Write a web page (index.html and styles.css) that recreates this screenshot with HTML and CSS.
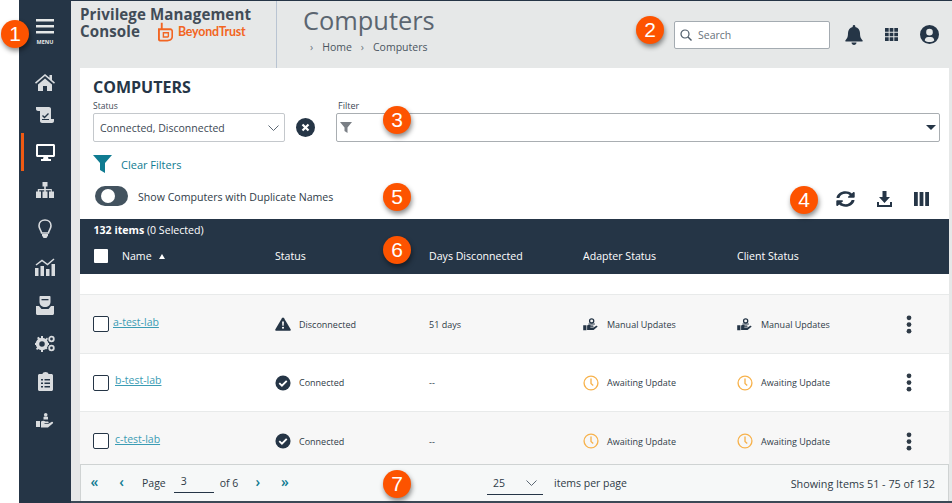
FILE: index.html
```html
<!DOCTYPE html>
<html lang="en">
<head>
<meta charset="utf-8">
<title>Computers</title>
<link rel="stylesheet" href="styles.css">
</head>
<body>
<svg class="defs" width="0" height="0">
  <symbol id="i-hand" viewBox="0 0 24 20"><path d="M0 11h5v8H0zM6 11.500c2-1.500 4-1.500 6 0h3c1.500 0 1.500 2 0 2h-4v1h5l4-2.500c1.500-.8 2.700.8 1.500 2L16 18.500H6z"/><circle cx="13" cy="4.500" r="3.200" fill="none" stroke="currentColor" stroke-width="2"/><path d="M8 8.500h10v1.500H8z"/></symbol>
  <symbol id="i-clock" viewBox="0 0 18 18"><circle cx="9" cy="9" r="7.800" fill="none" stroke="currentColor" stroke-width="1.500"/><path d="M9 4v5.500l2.500 2.200" fill="none" stroke="currentColor" stroke-width="1.500"/></symbol>
  <symbol id="i-check" viewBox="0 0 18 18"><circle cx="9" cy="9" r="8.500"/><path d="M4.800 9.200l3 2.900 5.400-5.500" fill="none" stroke="#fff" stroke-width="2.100"/></symbol>
  <symbol id="i-warn" viewBox="0 0 18 16"><path d="M9 0.500c.5 0 .9.300 1.200.800l7.500 12.700c.5.900-.1 1.800-1 1.800H1.300c-.9 0-1.500-.9-1-1.800L7.800 1.300C8.100.8 8.500.5 9 .5z"/><path d="M8 5h2l-.3 5H8.300z" fill="#fff"/><circle cx="9" cy="12.300" r="1.200" fill="#fff"/></symbol>
  <symbol id="i-kebab" viewBox="0 0 6 20"><circle cx="3" cy="3" r="2.500"/><circle cx="3" cy="10" r="2.500"/><circle cx="3" cy="17" r="2.500"/></symbol>
</svg>

<div class="window">
  <div class="gutter"></div>

  <nav class="sidebar">
    <div class="menu">
      <svg class="menu-bars" viewBox="0 0 18 15"><path d="M0 0h18v2.400H0zM0 6h18v2.400H0zM0 12h18v2.400H0z"/></svg>
      <span class="menu-label">MENU</span>
    </div>
    <a class="nav-item nav-home"><svg viewBox="0 0 20 17" width="20" height="17"><path d="M10 0L0 8.500l1 1.200L10 2l9 7.700 1-1.200-3-2.600V1h-2.500v2.800z"/><path d="M3 10.500L10 4.500l7 6V17h-5v-5H8v5H3z"/></svg></a>
    <a class="nav-item nav-doc"><svg viewBox="0 0 18 16" width="18" height="16"><path d="M0 0h13c1 0 2 .8 2 2v10h3v2c0 1-.8 2-2 2H6c-1 0-2-.8-2-2V4H2C1 4 0 3 0 2z"/><path d="M6.500 8.500l2 2 4-4" fill="none" stroke="#253546" stroke-width="1.400"/><path d="M6 12.500h7" stroke="#253546" stroke-width="1"/></svg></a>
    <a class="nav-item active"><svg viewBox="0 0 19 17" width="19" height="17"><path d="M1.500 0h16c.8 0 1.500.7 1.500 1.500v10c0 .8-.7 1.500-1.500 1.500h-5.500l.5 2h2.500v2h-10v-2H7l.5-2H1.500C.7 13 0 12.300 0 11.500v-10C0 .7.700 0 1.500 0zM2 2v9h15V2z" fill="#fff" fill-rule="evenodd"/></svg></a>
    <a class="nav-item"><svg viewBox="0 0 20 16" width="20" height="16"><path d="M7.500 0h5v4.500h-1.700V7h6v2.500H19V16h-5V9.500h1.800V8.300H10.800v1.200h1.700V16h-5V9.500h1.700V8.300H4.200v1.200H6V16H1V9.500h1.800V7h6.400V4.500H7.500z"/></svg></a>
    <a class="nav-item"><svg viewBox="0 0 14 20" width="14" height="20"><path d="M7 1C3.500 1 1 3.500 1 6.800c0 2.700 2 4.200 2.600 7.200h6.800C11 11 13 9.500 13 6.800 13 3.500 10.500 1 7 1z" fill="none" stroke="currentColor" stroke-width="1.600"/><path d="M4 15h6v1.500l-1.500 2.500h-3L4 16.500z"/></svg></a>
    <a class="nav-item"><svg viewBox="0 0 20 18" width="20" height="18"><path d="M0 10h3.500v8H0zM5.500 8H9v10H5.500zM11 11h3.500v7H11zM16.500 6H20v12h-3.500z"/><path d="M1 7l6-4.500 5.500 4L19 1" fill="none" stroke="currentColor" stroke-width="1.500"/></svg></a>
    <a class="nav-item"><svg viewBox="0 0 18 19" width="18" height="19"><path d="M3.500 1c0-.6.400-1 1-1h9c.6 0 1 .4 1 1v5c0 3-2.500 5-5.500 5S3.500 9 3.500 6z"/><path d="M5.500 3h7v1.300h-7z" fill="#253546"/><path d="M0 10h3l2.500 3h7l2.500-3h3v7.500c0 .8-.7 1.500-1.500 1.500h-15C.7 19 0 18.300 0 17.500z"/></svg></a>
    <a class="nav-item"><svg viewBox="0 0 20 17" width="20" height="17"><circle cx="7" cy="9" r="4.500" fill="none" stroke="currentColor" stroke-width="3.500"/><path d="M6 1h2v3H6zM6 14h2v3H6zM0 8h3v2H0zM11 8h3v2h-3zM2 3l1.500-1.200 2 2L4 5.300zM9 12.700l1.500-1.500 2 2-1.500 1.300zM2 15l-1-1.500 2.500-2L5 13zM9.500 5l2.500-2.500 1 1.500-2 2z"/><circle cx="16.500" cy="4" r="2.300" fill="none" stroke="currentColor" stroke-width="1.800"/><circle cx="16.500" cy="13" r="2.300" fill="none" stroke="currentColor" stroke-width="1.800"/></svg></a>
    <a class="nav-item"><svg viewBox="0 0 15 19" width="15" height="19"><path d="M1.500 2H4.500C4.500 .8 6 0 7.500 0s3 .8 3 2h3c.8 0 1.500.7 1.500 1.500v14c0 .8-.7 1.500-1.500 1.500h-12C.7 19 0 18.300 0 17.500v-14C0 2.700.7 2 1.500 2z"/><path d="M3 7h2v1.500H3zM6.500 7H12v1.500H6.500zM3 10.500h2V12H3zM6.500 10.500H12V12H6.500zM3 14h2v1.500H3zM6.500 14H12v1.500H6.500z" fill="#253546"/></svg></a>
    <a class="nav-item"><svg viewBox="0 0 18 15" width="18" height="15"><path d="M0 8h4v6H0zM5 8.500c1.500-1 3-1 4.500 0h2.300c1.200 0 1.200 1.700 0 1.700H8.500V11H12l3.500-2c1.200-.6 2.200.7 1.200 1.600L12 14.500H5z"/><circle cx="9.700" cy="1.800" r="1.800"/><path d="M7.500 4c1-.6 3.500-.6 4.500 0v2.500H7.500z"/></svg></a>
  </nav>

  <div class="main">
    <header class="topbar">
      <div class="brand">
        <div class="brand-title">Privilege Management</div>
        <div class="brand-row">
          <span class="brand-title">Console</span>
          <svg class="brand-logo" viewBox="0 0 16 20"><path d="M3 0v6H0v12c0 1 .8 2 2 2h8c3 0 6-2 6-5V9c0-1.500-1-3-3-3H5V0zM2 8h11c1 0 1.300.6 1.300 1.300V15c0 2-2 3.300-4.300 3.300H2.500c-.3 0-.5-.2-.5-.5zM5 10v6h5c1 0 1.800-.7 1.800-1.600V10zM6.500 11.500h3.800v3H6.500z" fill-rule="evenodd"/></svg>
          <span class="brand-name">BeyondTrust</span>
        </div>
      </div>
      <div class="page-head">
        <h1 class="page-title">Computers</h1>
        <div class="crumbs"><span class="sep">›</span><span>Home</span><span class="sep">›</span><span>Computers</span></div>
      </div>
      <div class="top-actions">
        <div class="search">
          <svg viewBox="0 0 12 12" width="12" height="12"><circle cx="5" cy="5" r="4" fill="none" stroke="#4c5a68" stroke-width="1.200"/><path d="M8 8l3.500 3.500" stroke="#4c5a68" stroke-width="1.400"/></svg>
          <span>Search</span>
        </div>
        <svg class="top-bell" viewBox="0 0 18 20" width="18" height="20"><path d="M9 0c.8 0 1.300.6 1.300 1.300v.6C13 2.500 15 4.800 15 8c0 4.500 1.200 5.800 2.500 7.200.5.600.2 1.300-.6 1.300H1.100c-.8 0-1.100-.7-.6-1.300C1.800 13.800 3 12.500 3 8c0-3.200 2-5.500 4.700-6.100v-.6C7.700.6 8.200 0 9 0z"/><path d="M6.500 17.500h5C11.500 19 10.300 20 9 20s-2.500-1-2.500-2.500z"/></svg>
        <svg class="top-grid" viewBox="0 0 13 13" width="13" height="13"><path d="M0 0h3.700v3.700H0zM4.650 0h3.700v3.700h-3.700zM9.300 0H13v3.700H9.300zM0 4.650h3.700v3.700H0zM4.650 4.650h3.700v3.700h-3.700zM9.300 4.650H13v3.700H9.300zM0 9.300h3.700V13H0zM4.650 9.300h3.700V13h-3.700zM9.300 9.300H13V13H9.300z"/></svg>
        <svg class="top-user" viewBox="0 0 20 20" width="19" height="19"><path d="M10 0a10 10 0 1 1 0 20 10 10 0 0 1 0-20zm0 4a3.500 3.500 0 1 0 0 7 3.500 3.500 0 0 0 0-7zm-5 12.200c1.300 1.200 3 1.800 5 1.800s3.700-.6 5-1.800c0-2-1.500-3.700-3.500-3.700h-3c-2 0-3.500 1.700-3.500 3.700z" fill-rule="evenodd"/></svg>
      </div>
    </header>

    <section class="panel">
      <div class="panel-head">
        <h2 class="panel-title">COMPUTERS</h2>
        <div class="filters">
          <div class="field field-status">
            <label class="field-label">Status</label>
            <div class="select">
              <span>Connected, Disconnected</span>
              <svg viewBox="0 0 11 6" width="11" height="6"><path d="M.5.500l5 5 5-5" fill="none" stroke="#5c6874" stroke-width="1"/></svg>
            </div>
          </div>
          <svg class="clear-x" viewBox="0 0 19 19" width="19" height="19"><circle cx="9.500" cy="9.500" r="9.500"/><path d="M6.500 6.500l6 6M12.500 6.500l-6 6" stroke="#fff" stroke-width="2.200"/></svg>
          <div class="field field-filter">
            <label class="field-label filter-label">Filter</label>
            <div class="select filter-box">
              <svg viewBox="0 0 12 11" width="12" height="11"><path d="M0 0h12L7.500 5.500V11l-3-2V5.500z" fill="#7a7f85"/></svg>
              <svg class="caret" viewBox="0 0 10 5" width="10" height="5"><path d="M0 0h10L5 5z" fill="#253546"/></svg>
            </div>
          </div>
        </div>
        <div class="clear-row">
          <svg viewBox="0 0 19 18" width="19" height="18"><path d="M0 0h19l-7 8v10l-5-3V8z" fill="#0f7b91"/></svg>
          <a class="clear-link">Clear Filters</a>
        </div>
        <div class="tool-row">
          <span class="toggle"><span class="knob"></span></span>
          <span class="toggle-label">Show Computers with Duplicate Names</span>
          <div class="tools">
            <svg viewBox="0 0 512 512" width="19" height="16" preserveAspectRatio="none"><path d="M370.720 133.280C339.458 104.008 298.888 87.962 255.848 88c-77.458.068-144.328 53.178-162.791 126.850-1.344 5.363-6.122 9.150-11.651 9.150H24.103c-7.498 0-13.194-6.807-11.807-14.176C33.933 94.924 134.813 8 256 8c66.448 0 126.791 26.136 171.315 68.685L463.030 40.970C478.149 25.851 504 36.559 504 57.941V192c0 13.255-10.745 24-24 24H345.941c-21.382 0-32.090-25.851-16.971-40.971l41.750-41.749zM32 296h134.059c21.382 0 32.090 25.851 16.971 40.971l-41.750 41.750c31.262 29.273 71.835 45.319 114.876 45.280 77.418-.070 144.315-53.144 162.787-126.849 1.344-5.363 6.122-9.150 11.651-9.150h57.304c7.498 0 13.194 6.807 11.807 14.176C478.067 417.076 377.187 504 256 504c-66.448 0-126.791-26.136-171.315-68.685L48.970 471.030C33.851 486.149 8 475.441 8 454.059V320c0-13.255 10.745-24 24-24z"/></svg>
            <svg viewBox="0 0 15 16" width="15" height="16"><path d="M5.500 0h4v6h3.500l-5.500 6L2 6h3.500z"/><path d="M0 11h2v3h11v-3h2v5H0z"/></svg>
            <svg viewBox="0 0 15 14" width="15" height="14"><path d="M0 0h3.800v14H0zM5.600 0h3.800v14H5.600zM11.200 0H15v14h-3.800z"/></svg>
          </div>
        </div>
      </div>

      <div class="grid-head">
        <div class="count"><b>132 items</b> (0 Selected)</div>
        <div class="row-cols head-cols">
          <div class="col-name"><span class="head-check"></span><span>Name</span><span class="sort"></span></div>
          <div>Status</div>
          <div>Days Disconnected</div>
          <div>Adapter Status</div>
          <div>Client Status</div>
          <div></div>
        </div>
      </div>

      <div class="grid-body">
        <div class="row-cols row row-a">
          <div class="col-name"><span class="check"></span><a class="link link-tight">a-test-lab</a></div>
          <div class="cell"><svg class="ico" width="16" height="14"><use href="#i-warn"/></svg><span>Disconnected</span></div>
          <div class="cell">51 days</div>
          <div class="cell"><svg class="ico" width="16" height="13"><use href="#i-hand"/></svg><span>Manual Updates</span></div>
          <div class="cell"><svg class="ico" width="16" height="13"><use href="#i-hand"/></svg><span>Manual Updates</span></div>
          <div class="cell"><svg width="6" height="19"><use href="#i-kebab"/></svg></div>
        </div>
        <div class="row-cols row row-b">
          <div class="col-name"><span class="check"></span><a class="link">b-test-lab</a></div>
          <div class="cell"><svg class="ico" width="16" height="16"><use href="#i-check"/></svg><span>Connected</span></div>
          <div class="cell">--</div>
          <div class="cell"><svg class="ico amber" width="16" height="16"><use href="#i-clock"/></svg><span>Awaiting Update</span></div>
          <div class="cell"><svg class="ico amber" width="16" height="16"><use href="#i-clock"/></svg><span>Awaiting Update</span></div>
          <div class="cell"><svg width="6" height="19"><use href="#i-kebab"/></svg></div>
        </div>
        <div class="row-cols row row-a">
          <div class="col-name"><span class="check"></span><a class="link">c-test-lab</a></div>
          <div class="cell"><svg class="ico" width="16" height="16"><use href="#i-check"/></svg><span>Connected</span></div>
          <div class="cell">--</div>
          <div class="cell"><svg class="ico amber" width="16" height="16"><use href="#i-clock"/></svg><span>Awaiting Update</span></div>
          <div class="cell"><svg class="ico amber" width="16" height="16"><use href="#i-clock"/></svg><span>Awaiting Update</span></div>
          <div class="cell"><svg width="6" height="19"><use href="#i-kebab"/></svg></div>
        </div>
      </div>

      <footer class="pager">
        <div class="pager-left">
          <span class="pg">«</span>
          <span class="pg">‹</span>
          <span class="page-word">Page</span>
          <span class="page-input">3</span>
          <span>of 6</span>
          <span class="pg pg-next">›</span>
          <span class="pg">»</span>
        </div>
        <div class="pager-mid">
          <span class="size-select"><span>25</span><svg viewBox="0 0 11 6" width="11" height="6"><path d="M.5.500l5 5 5-5" fill="none" stroke="#5c6874" stroke-width="1"/></svg></span>
          <span>items per page</span>
        </div>
        <div class="pager-right">Showing Items 51 - 75 of 132</div>
      </footer>
    </section>
  </div>
</div>

<span class="badge b1">1</span>
<span class="badge b2">2</span>
<span class="badge b3">3</span>
<span class="badge b4">4</span>
<span class="badge b5">5</span>
<span class="badge b6">6</span>
<span class="badge b7">7</span>
</body>
</html>
```

FILE: styles.css
```css
* { box-sizing: border-box; }
html, body { margin: 0; padding: 0; height: 503px; overflow: hidden; background: #fff; }
body { font-family: "Open Sans", "Liberation Sans", sans-serif; color: #253546; position: relative; }
.defs { position: absolute; }
svg { display: block; fill: currentColor; flex: none; }

.window { display: flex; height: 503px; }
.gutter { width: 19px; flex: none; }

.sidebar { width: 52px; flex: none; background: #253546; color: #d9dcdf; display: flex; flex-direction: column; align-items: center; padding-top: 19px; position: relative; border-bottom: 2px solid #253546; }
.menu { display: flex; flex-direction: column; align-items: center; height: 48px; flex: none; color: #e6e8e8; }
.menu-bars { width: 18px; height: 15px; }
.menu-label { font-size: 5.500px; font-weight: 700; margin-top: 4px; line-height: 8px; }
.nav-item { height: 38.300px; flex: none; width: 100%; display: flex; align-items: center; justify-content: center; position: relative; }
.nav-home { height: 30px; }
.nav-doc { height: 36px; }
.nav-item.active::before { content: ""; position: absolute; left: 2px; top: 0; bottom: 0; width: 3px; background: #ef5a13; }

.main { flex: 1; min-width: 0; display: flex; flex-direction: column; background: #e6e8e8; border-top: 1px solid #253546; border-bottom: 2px solid #3b4956; }

.topbar { height: 67px; flex: none; display: flex; align-items: stretch; }
.brand { width: 206px; flex: none; padding: 5px 0 0 9px; border-right: 1px solid #b9c4d2; }
.brand-title { font-size: 15.100px; font-weight: 700; color: #414c57; line-height: 17px; letter-spacing: .1px; }
.brand-row { display: flex; align-items: center; height: 17px; }
.brand-logo { width: 15px; height: 20px; margin: -2px 0 -2px 18px; color: #f26522; }
.brand-name { font-family: "Lato", sans-serif; font-size: 12.400px; font-weight: 700; color: #f26522; margin-left: 5px; letter-spacing: -.2px; }
.page-head { padding: 3px 0 0 26px; flex: none; }
.page-title { font-size: 25.400px; font-weight: 400; margin: 0; line-height: 32px; color: #5b6570; }
.crumbs { display: flex; font-size: 10.500px; color: #4a5560; gap: 9px; margin-top: 4px; padding-left: 7px; line-height: 15px; }
.crumbs .sep { color: #6c7680; }
.top-actions { margin-left: auto; display: flex; align-items: center; padding: 0 13px 0 0; height: 67px; color: #253546; }
.search { width: 156px; height: 28px; background: #fff; border: 1px solid #a4abb1; border-radius: 2px; display: flex; align-items: center; gap: 6px; padding-left: 5px; font-size: 10.500px; color: #68727c; }
.top-bell { margin-left: 15px; }
.top-grid { margin-left: 22px; }
.top-user { margin-left: 22px; }

.panel { flex: 1; min-height: 0; margin: 0 3px 0 9px; background: #fff; display: flex; flex-direction: column; }
.panel-head { height: 151px; flex: none; padding: 10px 9px 0 13px; }
.panel-title { font-size: 16px; font-weight: 700; margin: 0; line-height: 19px; color: #253546; }
.filters { display: flex; align-items: flex-end; margin-top: 3px; }
.field { display: flex; flex-direction: column; }
.field-status { width: 192px; flex: none; }
.field-filter { flex: 1; min-width: 0; margin-left: 21px; }
.field-label { font-size: 8.500px; line-height: 12px; height: 13px; color: #3c4854; }
.filter-label { font-size: 9px; margin-left: 2px; }
.select { height: 29px; border: 1px solid #c4c8cc; border-radius: 2px; display: flex; align-items: center; justify-content: space-between; padding: 0 5px 0 6px; font-size: 10.500px; color: #3c4854; }
.filter-box { border-color: #a9aeb2; padding-left: 3px; padding-right: 3px; }
.clear-x { margin: 0 0 5px 11px; color: #253546; }
.clear-row { display: flex; align-items: center; gap: 9px; margin-top: 13px; height: 18px; }
.clear-link { font-size: 11px; color: #0f7b91; }
.tool-row { display: flex; align-items: center; margin-top: 14px; height: 20px; padding-left: 2px; }
.toggle { width: 33px; height: 20px; border-radius: 10px; background: #43535f; position: relative; flex: none; margin-bottom: 2px; }
.knob { position: absolute; left: 6px; top: 3px; width: 14px; height: 14px; border-radius: 50%; background: #fff; }
.toggle-label { font-size: 10.600px; color: #2f3b47; margin-left: 10px; }
.tools { margin-left: auto; display: flex; align-items: center; gap: 22px; color: #253546; padding-right: 11px; margin-top: 4px; }

.grid-head { height: 55px; flex: none; background: #253546; color: #fff; font-size: 10.600px; }
.count { padding: 4px 0 0 13.500px; line-height: 14px; }
.count b { font-weight: 700; }
.row-cols { display: grid; grid-template-columns: 195px 154px 154px 154px 154px 1fr; align-items: center; }
.head-cols { height: 37px; }
.col-name { display: flex; align-items: center; padding-left: 14px; }
.head-check { width: 14px; height: 14px; background: #fff; border-radius: 1px; margin-right: 14px; }
.sort { width: 0; height: 0; border-left: 3.500px solid transparent; border-right: 3.500px solid transparent; border-bottom: 5px solid #fff; margin: 2px 0 0 7px; }

.grid-body { flex: 1; min-height: 0; padding-top: 20px; overflow: hidden; font-size: 9px; color: #2f3b47; }
.row { height: 59px; border-top: 1px solid #e8eaea; }
.row-b { height: 58px; }
.row-a { background: #f7f7f7; }
.check { width: 16px; height: 16px; border: 1px solid #253546; border-radius: 2px; background: #fff; flex: none; margin: 0 6px 0 -1px; }
.link { font-size: 10.500px; color: #3b9cb4; text-decoration: underline; margin-top: -5px; }
.link-tight { margin-left: -2px; }
.cell { display: flex; align-items: center; color: #2f3b47; }
.ico { margin-right: 8px; color: #253546; }
.amber { color: #f7b24c; }
.row-cols .cell:last-child { padding-left: 15px; }

.pager { height: 37px; flex: none; margin-bottom: 0; background: #f6f8f8; border: 1px solid #cfd3d3; border-bottom: 0; display: flex; align-items: center; font-size: 10.500px; color: #2f3b47; position: relative; }
.pager-left { display: flex; align-items: center; width: 406px; flex: none; }
.pg { color: #0f7b91; font-size: 14px; font-weight: 600; width: 27px; text-align: center; line-height: 14px; margin-top: -2px; }
.page-word { margin-left: 7px; }
.page-input { width: 40px; margin: 0 6px 0 8px; border-bottom: 1px solid #253546; height: 20px; padding-left: 7px; line-height: 16px; }
.pg-next { margin-left: 6px; }
.pager-mid { display: flex; align-items: center; gap: 11px; }
.size-select { width: 56px; height: 24px; border-bottom: 1px solid #253546; display: flex; align-items: center; justify-content: space-between; padding: 0 6px 0 6px; }
.pager-right { margin-left: auto; padding-right: 13px; font-size: 10.800px; }

.badge { position: absolute; width: 28px; height: 28px; border-radius: 50%; background: #fd5300; color: #fff; font-family: "Liberation Sans", sans-serif; font-size: 21px; line-height: 28px; text-align: center; box-shadow: 1px 3px 5px rgba(0,0,0,.45); }
.b1 { left: 1px; top: 20px; }
.b2 { left: 636px; top: 16px; }
.b3 { left: 383px; top: 106px; }
.b4 { left: 790px; top: 186px; }
.b5 { left: 383px; top: 183px; }
.b6 { left: 383px; top: 236px; }
.b7 { left: 383px; top: 470px; }
```
